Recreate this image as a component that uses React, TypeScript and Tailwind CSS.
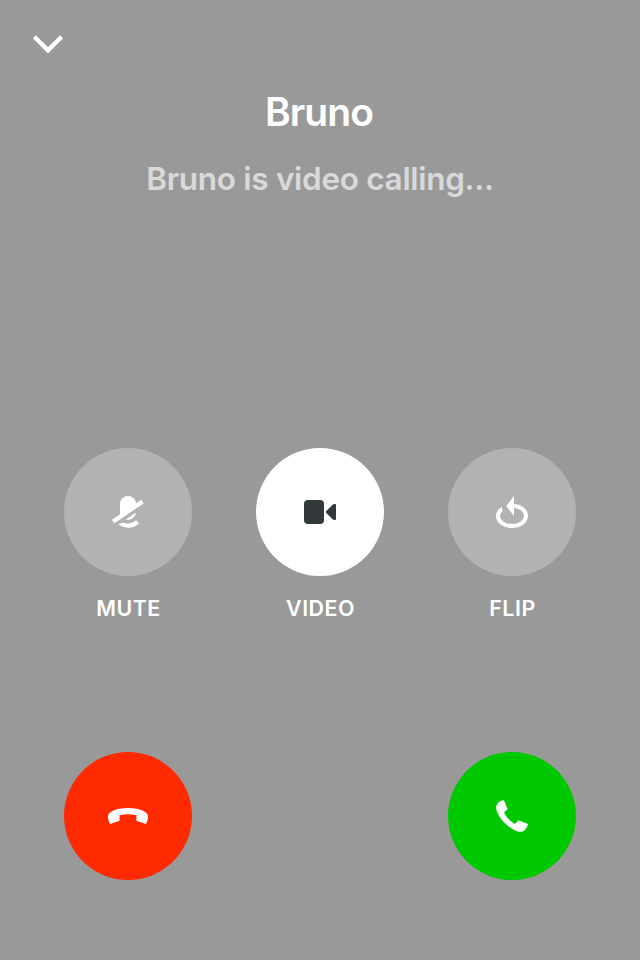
import type { ReactNode } from "react";

function Icon({ children }: { children: ReactNode }) {
  return (
    <svg width="60" height="60" viewBox="0 0 60 60" fill="currentColor" aria-hidden="true">
      {children}
    </svg>
  );
}

function MuteIcon() {
  return (
    <Icon>
      <path d="M22 35V22a8 8 0 0 1 16 0v1.3L22 35Z" />
      <path d="M13.9 37.7 43.3 17.8l2.4 3.6-29.4 19.9Z" />
      <path d="M27.8 37.4 38 30.6a8 8 0 0 1-10.2 6.8Z" />
      <path d="M20.4 42.8 24.2 40.4Q31.8 43.5 38.2 38.3L41.3 41.4Q31.6 49.4 20.4 42.8Z" />
    </Icon>
  );
}

function VideoIcon() {
  return (
    <Icon>
      <rect x="14" y="18" width="20" height="24" rx="4" />
      <path d="M36.5 28.8 42.7 22.7Q43.4 22 44.4 22H45Q46 22 46 23V37Q46 38 45 38H44.4Q43.4 38 42.7 37.3L36.5 31.2Q35.3 30 36.5 28.8Z" />
    </Icon>
  );
}

function FlipIcon() {
  return (
    <Icon>
      <path
        d="M19.6 27.3C17.2 29 16 31.3 16 34c0 5.5 6.3 10 14 10s14-4.5 14-10-5.3-9.8-12.5-10"
        fill="none"
        stroke="currentColor"
        strokeWidth="4"
      />
      <path d="M24.2 24 32 14V34Z" />
      <path d="M20 24.6V30L16 29Z" />
    </Icon>
  );
}

function DeclineIcon() {
  return (
    <Icon>
      <path d="M12 38C10.7 35.5 9.7 32 10 29.8 10.5 25.5 19.5 22 30 22s19.5 3.5 20 7.8C50.3 32 49.3 35.5 48 38L38.4 34.8V29.3Q30 27.1 21.6 29.3V34.8Z" />
    </Icon>
  );
}

function AcceptIcon() {
  return (
    <Icon>
      <path d="M21.8 14 25.6 22.9 22 26.4Q25.2 33.4 32.8 38.1L36.7 34.3 46 38.1C45.5 40.5 44 43.3 42.2 44.7 40.2 46.1 37.6 46.1 35.1 45.2 26 42 17 32.8 14.5 24 13.9 21.8 13.9 19.8 15.2 17.9 16.6 15.8 19.2 14.4 21.8 14Z" />
    </Icon>
  );
}

function RoundButton({ label, className, children }: { label: string; className: string; children: ReactNode }) {
  return (
    <button aria-label={label} className={`flex size-32 items-center justify-center rounded-full ${className}`}>
      {children}
    </button>
  );
}

function Control({ label, className, children }: { label: string; className: string; children: ReactNode }) {
  return (
    <div className="flex w-32 flex-col items-center">
      <RoundButton label={label} className={className}>{children}</RoundButton>
      <span className="mt-4 pl-px text-[21.4px] leading-8 font-semibold tracking-[0.5px]">{label}</span>
    </div>
  );
}

export default function App() {
  return (
    <main className="flex h-[960px] w-[640px] flex-col overflow-hidden bg-[#999999] font-['Inter',sans-serif] text-white">
      <header className="flex h-[88px] items-start pt-7 pl-8">
        <svg width="32" height="32" viewBox="0 0 32 32" fill="none" aria-label="Minimize">
          <path d="m2.4 8.7 13.6 13.6L29.6 8.7" stroke="currentColor" strokeWidth="4.4" />
        </svg>
      </header>
      <section className="flex h-[360px] flex-col items-center">
        <h1 className="pr-[2px] text-[39px] leading-[48px] font-semibold tracking-[-0.9px]">Bruno</h1>
        <p className="mt-[23px] text-[31.5px] leading-10 font-semibold tracking-[-0.3px] text-[#d9d9d9]">
          Bruno is video calling...
        </p>
      </section>
      <section className="flex justify-between px-16">
        <Control label="MUTE" className="bg-[#b2b2b2]"><MuteIcon /></Control>
        <Control label="VIDEO" className="bg-white text-[#33383b]"><VideoIcon /></Control>
        <Control label="FLIP" className="bg-[#b2b2b2]"><FlipIcon /></Control>
      </section>
      <section className="mt-32 flex justify-between px-16">
        <RoundButton label="Decline" className="bg-[#ff2a00]"><DeclineIcon /></RoundButton>
        <RoundButton label="Accept" className="bg-[#00c800]"><AcceptIcon /></RoundButton>
      </section>
    </main>
  );
}
